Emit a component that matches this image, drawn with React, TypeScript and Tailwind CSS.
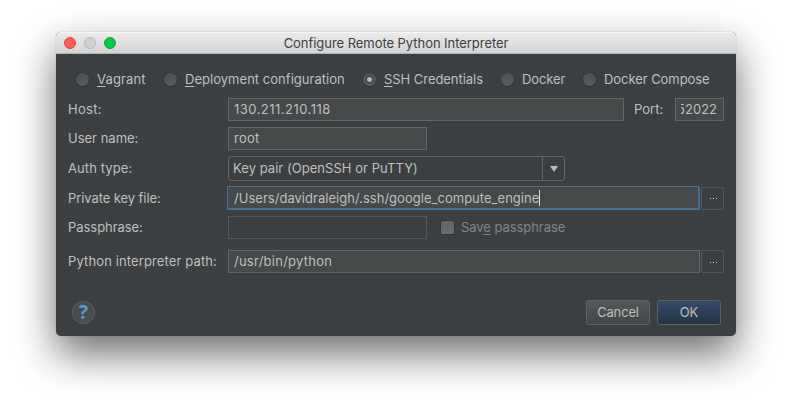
import type { ReactNode } from "react";

const field = "flex h-[23px] items-center border border-[#646464] bg-[#45494a] pl-[5px] leading-none whitespace-pre";

function Radio({ children, checked, className }: { children: ReactNode; checked?: boolean; className: string }) {
  return (
    <label className={`flex items-center gap-2 whitespace-pre ${className}`}>
      <span className="flex size-[13px] shrink-0 items-center justify-center rounded-full bg-linear-to-b from-[#4d5153] to-[#585c5e] shadow-[0_0_0_1px_#36393b,0_1px_1px_#2b2e30]">
        {checked && <span className="size-[5px] rounded-full bg-[#b4b4b4] shadow-[0_0_0_1px_#3d4143]" />}
      </span>
      <span>{children}</span>
    </label>
  );
}

function Mnemonic({ children }: { children: string }) {
  return <span className="underline decoration-1 underline-offset-[2px] [text-decoration-skip-ink:none]">{children}</span>;
}

function Row({ label, className, labelClass, children }: { label: string; className: string; labelClass: string; children: ReactNode }) {
  return (
    <div className={`flex items-center ${className}`}>
      <span className={`w-[160px] shrink-0 pb-px whitespace-nowrap ${labelClass}`}>{label}</span>
      {children}
    </div>
  );
}

function Browse() {
  return (
    <button className="ml-px flex h-[23px] w-[23px] items-center justify-center gap-[2px] rounded-[2px] border border-[#55595b] pl-px pt-px">
      <span className="size-px bg-[#d0d0d0]" />
      <span className="size-px bg-[#d0d0d0]" />
      <span className="size-px bg-[#d0d0d0]" />
    </button>
  );
}

export default function App() {
  return (
    <div className="h-[416px] w-[792px] overflow-hidden bg-white pl-[56px] pt-[32px] font-['Inter',sans-serif] text-[13px] leading-4 text-[#bfbfbf]">
      <div className="flex h-[304px] w-[680px] flex-col rounded-[5px] bg-[#3c3f41] shadow-[0_0_1px_rgba(0,0,0,0.45),0_18px_40px_rgba(0,0,0,0.57)]">
        <header className="relative flex h-[22px] shrink-0 items-center justify-center rounded-t-[5px] border-b border-[#b3b3b3] bg-linear-to-b from-[#ececec] to-[#d4d4d4] shadow-[inset_0_1px_0_#f6f6f6]">
          <div className="absolute left-2 top-[5px] flex gap-2">
            <span className="size-3 rounded-full border border-[#e2463f] bg-[#ff5f57]" />
            <span className="size-3 rounded-full border border-[#b9b9b9] bg-[#d0d0d0]" />
            <span className="size-3 rounded-full border border-[#12ac28] bg-[#00ca4e]" />
          </div>
          <h1 className="pt-px text-[13px] tracking-[-0.05px] whitespace-nowrap text-[#404040]">Configure Remote Python Interpreter</h1>
        </header>

        <main className="flex flex-col pl-3">
          <div className="mt-[17px] flex h-[16px] items-center pl-2">
            <Radio className="w-[88px] tracking-[0.15px]"><Mnemonic>V</Mnemonic>agrant</Radio>
            <Radio className="w-[199px] tracking-[0.03px]"><Mnemonic>D</Mnemonic>eployment configuration</Radio>
            <Radio className="w-[138px] tracking-[-0.05px]" checked><Mnemonic>S</Mnemonic>SH Credentials</Radio>
            <Radio className="w-[82px] tracking-[-0.1px]">Docker</Radio>
            <Radio className="tracking-[-0.06px]">Docker Compose</Radio>
          </div>

          <Row label="Host:" className="mt-[11px] h-[23px]" labelClass="tracking-[0.3px]">
            <div className={`${field} w-[396px] tracking-[0.48px]`}>130.211.210.118</div>
            <span className="ml-[10px] w-[41px] pb-px">Port:</span>
            <div className={`${field} w-[49px]`}>
              <div className="flex w-[36px] justify-end overflow-hidden"><span>52022</span></div>
            </div>
          </Row>
          <Row label="User name:" className="mt-[6px] h-[23px]" labelClass="">
            <div className={`${field} w-[199px] tracking-[0.25px]`}>root</div>
          </Row>
          <Row label="Auth type:" className="mt-[6px] h-[25px]" labelClass="tracking-[0.1px]">
            <div className="flex h-[25px] w-[337px] rounded-[3px] border border-[#646464]">
              <span className="flex w-[314px] items-center border-r border-[#646464] pb-px pl-1 tracking-[0.04px] whitespace-nowrap">Key pair (OpenSSH or PuTTY)</span>
              <span className="flex flex-1 items-center justify-center">
                <svg width="8" height="6" viewBox="0 0 8 6"><path d="M0 0h8L4 6z" fill="#bbb" /></svg>
              </span>
            </div>
          </Row>
          <Row label="Private key file:" className="mt-[5px] h-[24px]" labelClass="pt-px tracking-[-0.08px]">
            <div className="-ml-px flex h-[24px] w-[473px] items-center rounded-[1px] border border-r-2 border-b-2 border-[#466d94] bg-[#45494a] pl-[6px] tracking-[0.025px] whitespace-nowrap">
              <span>/Users/davidraleigh/.ssh/google_compute_engine</span>
              <span className="h-4 w-px bg-[#dddddd]" />
            </div>
            <Browse />
          </Row>
          <Row label="Passphrase:" className="mt-[6px] h-[23px]" labelClass="tracking-[-0.05px]">
            <div className="h-[23px] w-[199px] border border-[#55585a]" />
            <span className="ml-[14px] size-[13px] rounded-[2px] bg-linear-to-b from-[#636363] to-[#6b6b6b] shadow-[0_0_0_1px_#333638]" />
            <span className="ml-[7px] pb-px tracking-[-0.06px] whitespace-nowrap text-[#838485]">Sav<Mnemonic>e</Mnemonic> passphrase</span>
          </Row>
          <Row label="Python interpreter path:" className="mt-[11px] h-[23px]" labelClass="tracking-[0.12px]">
            <div className={`${field} w-[472px] tracking-[0.25px]`}>/usr/bin/python</div>
            <Browse />
          </Row>
        </main>

        <footer className="mt-[27px] flex h-[25px] items-center pl-4">
          <button className="flex size-[23px] items-center justify-center rounded-full border border-[#5c6062] bg-[#484c4e] pb-px font-['Open_Sans',sans-serif] text-[20px] leading-none font-bold text-[#4c9bc9]">?</button>
          <button className="ml-[491px] h-[25px] w-[64px] rounded-[3px] border border-[#5e6263] bg-linear-to-b from-[#53585a] to-[#414647] pb-px tracking-[-0.15px]">Cancel</button>
          <button className="ml-[7px] h-[25px] w-[64px] rounded-[3px] border border-[#5a6068] bg-linear-to-b from-[#364b68] to-[#233143] pb-px">OK</button>
        </footer>
      </div>
    </div>
  );
}
